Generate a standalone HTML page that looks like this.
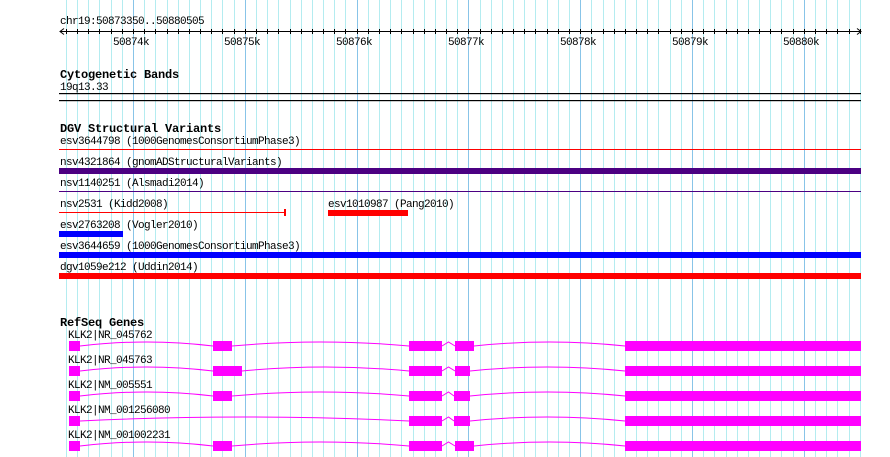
<!DOCTYPE html>
<html><head><meta charset="utf-8"><style>
html,body{margin:0;padding:0;background:#fff;width:890px;height:457px;overflow:hidden}
svg{display:block}
text{font-family:"Liberation Mono","DejaVu Sans Mono",monospace;font-size:11px;letter-spacing:-0.6px;fill:#000}
.b{font-weight:bold;font-size:12px;letter-spacing:-0.2px}
</style></head><body>
<svg id="s" width="890" height="457" xmlns="http://www.w3.org/2000/svg">
<g id="grid"></g>
<text x="60" y="24">chr19:50873350..50880505</text>
<line x1="60" y1="31.5" x2="861" y2="31.5" stroke="#000"/>
<path d="M64 28.5 L60 31.5 L64 34.5 M857 28.5 L861 31.5 L857 34.5" stroke="#000" fill="none"/>
<g id="ticks"></g>
<text x="113" y="45">50874k</text><text x="224" y="45">50875k</text><text x="336" y="45">50876k</text><text x="448" y="45">50877k</text><text x="560" y="45">50878k</text><text x="672" y="45">50879k</text><text x="783" y="45">50880k</text>
<text class="b" x="60" y="78">Cytogenetic Bands</text>
<text x="60" y="90">19q13.33</text>
<rect x="59" y="93" width="802" height="1.2" fill="#000"/>
<rect x="59" y="100" width="802" height="1.2" fill="#000"/>
<text class="b" x="60" y="132">DGV Structural Variants</text>
<text x="60" y="144">esv3644798 (1000GenomesConsortiumPhase3)</text>
<rect x="59" y="149" width="802" height="1" fill="#f00"/>
<text x="60" y="165">nsv4321864 (gnomADStructuralVariants)</text>
<rect x="59" y="168" width="802" height="6" fill="#4b0082"/>
<text x="60" y="186">nsv1140251 (Alsmadi2014)</text>
<rect x="59" y="191" width="802" height="1" fill="#4b0082"/>
<text x="60" y="207">nsv2531 (Kidd2008)</text>
<rect x="59" y="212" width="226" height="1" fill="#f00"/>
<rect x="284" y="209" width="2" height="7" fill="#f00"/>
<text x="328" y="207">esv1010987 (Pang2010)</text>
<rect x="328" y="210" width="80" height="6" fill="#f00"/>
<text x="60" y="228">esv2763208 (Vogler2010)</text>
<rect x="59" y="231" width="64" height="6" fill="#00f"/>
<text x="60" y="249">esv3644659 (1000GenomesConsortiumPhase3)</text>
<rect x="59" y="252" width="802" height="6" fill="#00f"/>
<text x="60" y="270">dgv1059e212 (Uddin2014)</text>
<rect x="59" y="273" width="802" height="6" fill="#f00"/>
<text class="b" x="60" y="326">RefSeq Genes</text>
<g id="genes"></g>
</svg>
<script>
var ns="http://www.w3.org/2000/svg";
function el(p,t,a){var e=document.createElementNS(ns,t);for(var k in a)e.setAttribute(k,a[k]);document.getElementById(p).appendChild(e);return e;}
for(var n=-6;n<=65;n++){var x=Math.round(133+n*11.18)+0.5;if(x>861)break;
 el("grid","line",{x1:x,y1:0,x2:x,y2:457,stroke:(n%10==0)?"#88c4e8":"#b4ecf0","stroke-width":1});
 el("ticks","line",{x1:x,y1:29,x2:x,y2:34,stroke:"#000","stroke-width":1});}
var names=["KLK2|NR_045762","KLK2|NR_045763","KLK2|NM_005551","KLK2|NM_001256080","KLK2|NM_001002231"];
var ex2=[[213,232],[213,242],[213,232],null,[213,232]];
var ex4=[[455,474],[455,470],[454,470],[454,470],[455,474]];
for(var i=0;i<5;i++){var t=341+i*25;var m=t+5;
 var tx=el("genes","text",{x:68,y:t-3});tx.textContent=names[i];
 var d="";
 function intr(a,b){var mid=(a+b)/2;d+="M"+a+" "+m+" Q"+mid+" "+(m-8)+" "+b+" "+m+" ";}
 var e2=ex2[i];
 if(e2){intr(80,e2[0]);intr(e2[1],409);}else intr(80,409);
 d+="M442 "+m+" L448.5 "+(t+1)+" L"+ex4[i][0]+" "+m+" ";
 intr(ex4[i][1],625);
 el("genes","path",{d:d,stroke:"#f0f",fill:"none","stroke-width":1});
 var boxes=[[69,80],e2,[409,442],ex4[i],[625,861]];
 boxes.forEach(function(b){if(b)el("genes","rect",{x:b[0],y:t,width:b[1]-b[0],height:10,fill:"#f0f"});});
}
</script>
</body></html>
